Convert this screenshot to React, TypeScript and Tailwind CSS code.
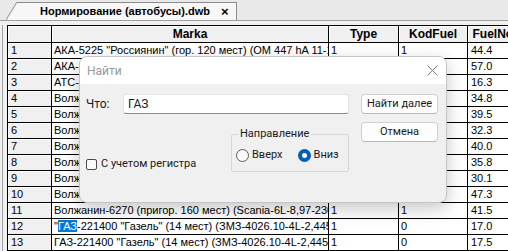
const rows = [
	{ n: "1", marka: 'АКА-5225 "Россиянин" (гор. 120 мест) (OM 447 hA 11-12 л, 250 л.с.)', type: "1", kod: "1", fuel: "44.4" },
	{ n: "2", marka: 'АКА-6226 "Россиянин" (гор. 160 мест)', type: "1", kod: "1", fuel: "57.0" },
	{ n: "3", marka: "АТС-3285 (15 мест)", type: "1", kod: "0", fuel: "16.3" },
	{ n: "4", marka: "Волжанин-5270 (гор. 110 мест)", type: "1", kod: "1", fuel: "34.8" },
	{ n: "5", marka: "Волжанин-52701 (гор. 110 мест)", type: "1", kod: "1", fuel: "39.5" },
	{ n: "6", marka: "Волжанин-52702 (гор. 100 мест)", type: "1", kod: "1", fuel: "32.3" },
	{ n: "7", marka: "Волжанин-6270 (гор. 160 мест)", type: "1", kod: "1", fuel: "40.0" },
	{ n: "8", marka: "Волжанин-5285 (пригор. 90 мест)", type: "1", kod: "1", fuel: "35.8" },
	{ n: "9", marka: "Волжанин-3290 (гор. 70 мест)", type: "1", kod: "1", fuel: "30.1" },
	{ n: "10", marka: "Волжанин-6270 (гор. 170 мест)", type: "1", kod: "1", fuel: "47.3" },
	{ n: "11", marka: "Волжанин-6270 (пригор. 160 мест) (Scania-6L-8,97-230)", type: "1", kod: "1", fuel: "41.5" },
	{ n: "12", marka: "", type: "1", kod: "0", fuel: "17.0" },
	{ n: "13", marka: 'ГАЗ-221400 "Газель" (14 мест) (ЗМЗ-4026.10-4L-2,445-100)', type: "1", kod: "0", fuel: "17.5" },
];

const TabStrip = () => (
	<div className="flex h-[21px] items-end border-b border-[#a0a0a0] bg-[#e9e9e9]">
		<div className="w-[6px]" />
		<svg width="11" height="18" viewBox="0 0 11 18" className="block shrink-0">
			<polygon points="0,18 11,0 11,18" fill="#f7f7f7" />
			<line x1="0" y1="18" x2="11" y2="0" stroke="#8c8c8c" strokeWidth="1" />
		</svg>
		<div className="flex h-[18px] w-[220px] items-center whitespace-nowrap border-r border-t border-[#8c8c8c] bg-[#f7f7f7] pl-[23px] text-[11px] font-bold leading-none">
			<span>Нормирование (автобусы).dwb</span>
			<span className="ml-[11px] text-[13px]">×</span>
		</div>
	</div>
);

const Grid = () => (
	<div className="shrink-0 border-l border-t border-black bg-white text-[11px] leading-[15px]">
		<div className="flex h-[17px] border-b border-black bg-[#f0f0f0] text-[12px] font-bold leading-[16px]">
			<div className="w-[44px] shrink-0 border-r border-black shadow-[inset_1px_1px_0_#ffffff]" />
			<div className="w-[277px] shrink-0 border-r border-black text-center shadow-[inset_1px_1px_0_#ffffff]">Marka</div>
			<div className="w-[70px] shrink-0 border-r border-black text-center shadow-[inset_1px_1px_0_#ffffff]">Type</div>
			<div className="w-[69px] shrink-0 border-r border-black text-center shadow-[inset_1px_1px_0_#ffffff]">KodFuel</div>
			<div className="w-[66px] shrink-0 border-r border-black text-center shadow-[inset_1px_1px_0_#ffffff]">FuelNorm</div>
		</div>
		{rows.map((r) => (
			<div key={r.n} className="flex h-[16px] border-b border-black">
				<div className="w-[44px] shrink-0 border-r border-black bg-[#f0f0f0] pl-[3px] shadow-[inset_1px_1px_0_#ffffff]">
					{r.n}
				</div>
				<div className="w-[277px] shrink-0 overflow-hidden whitespace-nowrap border-r border-black pl-[2px]">
					{r.n === "12" ? (
						<>
							<span>"</span>
							<span className="bg-[#0078d7] text-white">ГАЗ</span>
							<span>-221400 "Газель" (14 мест) (ЗМЗ-4026.10-4L-2,445-100)</span>
						</>
					) : (
						r.marka
					)}
				</div>
				<div className="w-[70px] shrink-0 border-r border-black pl-[2px]">{r.type}</div>
				<div className="w-[69px] shrink-0 border-r border-black pl-[2px]">{r.kod}</div>
				<div className="w-[66px] shrink-0 border-r border-black pl-[3px]">{r.fuel}</div>
			</div>
		))}
	</div>
);

const Radio = ({ checked, label }: { checked?: boolean; label: string }) => (
	<label className="flex items-center gap-[3px]">
		{checked ? (
			<span className="flex h-[13px] w-[13px] items-center justify-center rounded-full bg-[#005fb8]">
				<span className="h-[5px] w-[5px] rounded-full bg-white" />
			</span>
		) : (
			<span className="h-[13px] w-[13px] rounded-full border border-[#5a5a5a] bg-[#fafafa]" />
		)}
		<span>{label}</span>
	</label>
);

const FindDialog = () => (
	<div className="absolute left-[79px] top-[56px] flex h-[147px] w-[368px] flex-col overflow-hidden rounded-[8px] border border-[#c4c4c4] bg-[#f0f0f0] font-['Roboto',sans-serif] text-[11px] leading-[16px] text-[#1a1a1a] shadow-[0_6px_18px_rgba(0,0,0,0.22)]">
		<div className="flex h-[27px] shrink-0 items-center justify-between bg-white pl-[7px] pr-[8px]">
			<span className="text-[12px] text-[#999999]">Найти</span>
			<svg width="11" height="11" viewBox="0 0 11 11" className="block">
				<path d="M0.5 0.5 L10.5 10.5 M10.5 0.5 L0.5 10.5" stroke="#7a7a7a" strokeWidth="1" />
			</svg>
		</div>
		<div className="flex flex-1 pl-[6px] pr-[8px] pt-[10px]">
			<div className="flex w-[263px] flex-col">
				<div className="flex h-[20px] items-center">
					<span className="w-[37px] text-[12px]">Что:</span>
					<div className="flex h-[20px] w-[226px] items-center rounded-[3px] border border-[#e3e3e3] border-b-[#8a8a8a] bg-white pl-[4px] text-[12px]">
						ГАЗ
					</div>
				</div>
				<div className="flex items-start">
					<label className="mt-[42px] flex h-[16px] items-center gap-[4px]">
						<span className="h-[11px] w-[11px] rounded-[2px] border border-[#4a4a4a] bg-[#fafafa]" />
						<span>С учетом регистра</span>
					</label>
					<fieldset className="ml-auto mt-[12px] h-[46px] w-[118px] rounded-[2px] border border-[#d6d6d6] pl-[4px]">
						<legend className="ml-[2px] px-[2px]">Направление</legend>
						<div className="mt-[5px] flex h-[16px] items-center gap-[15px]">
							<Radio label="Вверх" />
							<Radio checked label="Вниз" />
						</div>
					</fieldset>
				</div>
			</div>
			<div className="ml-[12px] flex flex-col gap-[8px]">
				<button className="h-[20px] w-[77px] rounded-[4px] border border-[#d0d0d0] border-b-[#b8b8b8] bg-[#fdfdfd]">
					Найти далее
				</button>
				<button className="h-[20px] w-[77px] rounded-[4px] border border-[#d0d0d0] border-b-[#b8b8b8] bg-[#fdfdfd]">
					Отмена
				</button>
			</div>
		</div>
	</div>
);

export default function App() {
	return (
		<div className="relative h-[251px] w-[508px] overflow-hidden bg-[#f0f0f0] font-['Liberation_Sans',Arial,sans-serif] text-black">
			<TabStrip />
			<div className="h-[4px]" />
			<div className="flex">
				<div className="ml-[2px] w-[5px] shrink-0 border-l border-[#a0a0a0]" />
				<Grid />
			</div>
			<FindDialog />
		</div>
	);
}
